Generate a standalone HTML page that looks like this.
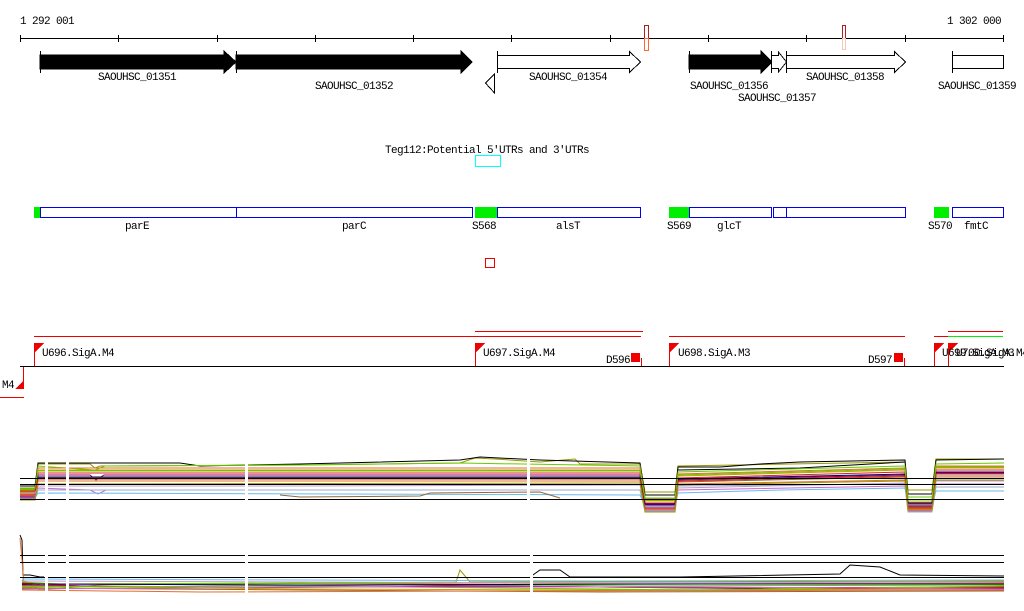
<!DOCTYPE html>
<html><head><meta charset="utf-8"><style>
html,body{margin:0;padding:0;background:#fff;width:1024px;height:611px;overflow:hidden}
text{font-family:"Liberation Mono",monospace;font-size:11px;letter-spacing:-0.6px;fill:#000}
</style></head><body>
<svg width="1024" height="611" viewBox="0 0 1024 611" xmlns="http://www.w3.org/2000/svg" shape-rendering="crispEdges">
<text x="20" y="24">1 292 001</text>
<text x="947" y="24">1 302 000</text>
<rect x="20" y="38" width="984" height="1" fill="#000"/>
<g stroke="#000">
<line x1="20.5" y1="35" x2="20.5" y2="42"/><line x1="118.5" y1="35" x2="118.5" y2="42"/><line x1="217.5" y1="35" x2="217.5" y2="42"/><line x1="315.5" y1="35" x2="315.5" y2="42"/><line x1="413.5" y1="35" x2="413.5" y2="42"/><line x1="511.5" y1="35" x2="511.5" y2="42"/><line x1="610.5" y1="35" x2="610.5" y2="42"/><line x1="708.5" y1="35" x2="708.5" y2="42"/><line x1="806.5" y1="35" x2="806.5" y2="42"/><line x1="905.5" y1="35" x2="905.5" y2="42"/><line x1="1003.5" y1="35" x2="1003.5" y2="42"/>
</g>
<rect x="644.5" y="25.5" width="4" height="13" fill="none" stroke="#aa2222"/>
<rect x="644.5" y="38.5" width="4" height="12" fill="none" stroke="#ff6633"/>
<rect x="842.5" y="25.5" width="3" height="13" fill="none" stroke="#aa2222"/>
<rect x="842.5" y="38.5" width="3" height="11" fill="none" stroke="#f5c8b8"/>
<g stroke="#000">
<line x1="40.5" y1="51" x2="40.5" y2="73"/>
<polygon points="40,55 224,55 224,51 236,62 224,73 224,69 40,69" fill="#000"/>
<line x1="236.5" y1="51" x2="236.5" y2="73"/>
<polygon points="236,55 461,55 461,51 472,62 461,73 461,69 236,69" fill="#000"/>
<polygon points="485.5,83 494.5,74 494.5,93" fill="#fff"/>
<line x1="497.5" y1="51" x2="497.5" y2="73"/>
<polygon points="497.5,55.5 629.5,55.5 629.5,51.5 640.5,62 629.5,72.5 629.5,68.5 497.5,68.5" fill="#fff"/>
<line x1="689.5" y1="51" x2="689.5" y2="73"/>
<polygon points="689,55 761,55 761,51 772,62 761,73 761,69 689,69" fill="#000"/>
<line x1="771.5" y1="51" x2="771.5" y2="73"/>
<polygon points="771.5,55.5 778.5,55.5 778.5,52 786.5,62 778.5,72 778.5,68.5 771.5,68.5" fill="#fff"/>
<line x1="786.5" y1="51" x2="786.5" y2="73"/>
<polygon points="786.5,55.5 894.5,55.5 894.5,51.5 905.5,62 894.5,72.5 894.5,68.5 786.5,68.5" fill="#fff"/>
<line x1="952.5" y1="51" x2="952.5" y2="73"/>
<rect x="952.5" y="55.5" width="51" height="13" fill="#fff"/>
</g>
<text x="98" y="80">SAOUHSC_01351</text>
<text x="315" y="89">SAOUHSC_01352</text>
<text x="529" y="80">SAOUHSC_01354</text>
<text x="690" y="89">SAOUHSC_01356</text>
<text x="738" y="101">SAOUHSC_01357</text>
<text x="806" y="80">SAOUHSC_01358</text>
<text x="938" y="89">SAOUHSC_01359</text>
<text x="385" y="153">Teg112:Potential 5′UTRs and 3′UTRs</text>
<rect x="475.5" y="155.5" width="25" height="11" fill="none" stroke="#00ffff"/>
<g fill="#00ee00"><rect x="34" y="207" width="6" height="11"/><rect x="475" y="207" width="22" height="11"/><rect x="669" y="207" width="20" height="11"/><rect x="934" y="207" width="15" height="11"/></g>
<g fill="none" stroke="#0000ee">
<rect x="40.5" y="207.5" width="196" height="10"/><rect x="236.5" y="207.5" width="236" height="10"/><rect x="497.5" y="207.5" width="143" height="10"/><rect x="689.5" y="207.5" width="82" height="10"/><rect x="773.5" y="207.5" width="13" height="10"/><rect x="786.5" y="207.5" width="119" height="10"/><rect x="952.5" y="207.5" width="51" height="10"/>
</g>
<text x="125" y="229">parE</text><text x="342" y="229">parC</text><text x="472" y="229">S568</text><text x="556" y="229">alsT</text>
<text x="667" y="229">S569</text><text x="717" y="229">glcT</text><text x="928" y="229">S570</text><text x="964" y="229">fmtC</text>
<rect x="485.5" y="258.5" width="9" height="9" fill="none" stroke="#ee0000"/>
<g fill="#ee0000">
<rect x="34" y="336" width="607" height="1"/><rect x="475" y="331" width="168" height="1"/>
<rect x="669" y="336" width="236" height="1"/><rect x="934" y="336" width="14" height="1"/><rect x="948" y="331" width="55" height="1"/>
<rect x="0" y="397" width="24" height="1"/>
</g>
<rect x="948" y="336" width="55" height="1" fill="#00ee00"/>
<rect x="20" y="366" width="984" height="1" fill="#000"/>
<g fill="#ee0000" stroke="#ee0000">
<line x1="34.5" y1="343" x2="34.5" y2="366"/><polygon points="35,343 44,343 35,352" stroke="none"/>
<line x1="475.5" y1="343" x2="475.5" y2="366"/><polygon points="476,343 485,343 476,352" stroke="none"/>
<line x1="669.5" y1="343" x2="669.5" y2="366"/><polygon points="670,343 679,343 670,352" stroke="none"/>
<line x1="934.5" y1="343" x2="934.5" y2="366"/><polygon points="935,343 944,343 935,352" stroke="none"/>
<line x1="948.5" y1="343" x2="948.5" y2="366"/><polygon points="949,343 958,343 949,352" stroke="none"/>
<rect x="631" y="353" width="9" height="9" stroke="none"/><line x1="641.5" y1="358" x2="641.5" y2="366"/>
<rect x="894" y="353" width="9" height="9" stroke="none"/><line x1="904.5" y1="358" x2="904.5" y2="366"/>
<line x1="23.5" y1="367" x2="23.5" y2="389"/><polygon points="24,380 24,389 15,389" stroke="none"/>
</g>
<text x="42" y="356">U696.SigA.M4</text>
<text x="483" y="356">U697.SigA.M4</text>
<text x="606" y="363">D596</text>
<text x="678" y="356">U698.SigA.M3</text>
<text x="868" y="363">D597</text>
<text x="942" y="356">U699.SigA.M3</text>
<text x="956" y="356">U700.SigA.M4</text>
<text x="-4" y="388">.M4</text>
<g fill="none" stroke-width="1" shape-rendering="auto">
<polyline stroke="#999900" points="20,488 35,488 38,464 90,464 95,468 100,466 300,465 460,463 475,458 495,459 540,462 575,459 580,464 640,464 645,492 675,492 678,466 905,462 908,490 932,490 936,459 1004,459"/>
<polyline stroke="#000" points="20,486 35,486 38,463 180,463 200,466 300,464 460,460 480,457 540,460 640,463 645,495 675,495 678,467 720,467 760,464 800,462 905,460 908,494 932,494 936,460 1004,459"/>
<polyline stroke="#000" points="678,470 800,468 905,462"/>
<polyline stroke="#66cc00" points="20,490 35,490 38,466 95,470 105,466 300,465 460,463 640,466 645,498 675,498 678,472 905,466 908,497 932,497 936,464 1004,463"/>
<polyline stroke="#e07030" points="20,492 35,492 38,468 640,468 645,499 675,499 678,474 905,468 908,500 932,500 936,466 1004,466"/>
<polyline stroke="#cc9900" points="20,494 35,494 38,470 640,470 645,501 675,501 678,476 905,470 908,502 932,502 936,468 1004,468"/>
<polyline stroke="#e02020" points="20,495 35,495 38,473 640,473 645,503 675,503 678,478 905,472 908,504 932,504 936,470 1004,470"/>
<polyline stroke="#990066" points="20,497 35,497 38,475 90,475 96,480 104,475 640,475 645,505 675,505 678,480 905,475 908,506 932,506 936,473 1004,473"/>
<polyline stroke="#996633" points="20,499 35,499 38,478 640,478 645,507 675,507 678,482 905,477 908,507 932,507 936,476 1004,476"/>
<polyline stroke="#e07030" points="20,500 35,500 38,481 640,481 645,509 675,509 678,484 905,480 908,509 932,509 936,478 1004,478"/>
<polyline stroke="#bb99cc" points="20,493 35,493 38,486 300,486 640,485 645,507 675,507 678,488 905,483 908,510 932,510 936,481 1004,481"/>
<polyline stroke="#cc66cc" points="20,496 35,496 38,488 90,490 98,494 106,490 640,490 645,510 675,510 678,490 905,486 908,511 932,511 936,484 1004,484"/>
<polyline stroke="#66bbee" points="20,498 35,498 38,493 640,495 645,506 675,506 678,493 780,490 905,488 908,505 932,505 936,491 1004,491"/>
<polyline stroke="#99aacc" points="20,498 35,498 38,490 640,490 645,511 675,511 678,486 905,484 908,512 932,512 936,487 1004,487"/>
<polyline stroke="#000066" points="20,491 35,491 38,477 640,477 645,504 675,504 678,479 905,474 908,503 932,503 936,472 1004,472"/>
<polyline stroke="#66cc00" points="20,489 35,489 38,471 640,471 645,500 675,500 678,475 905,469 908,500 932,500 936,467 1004,467"/>
<polyline stroke="#e02020" points="20,491 35,491 38,479 640,479 645,508 675,508 678,481 905,476 908,508 932,508 936,474 1004,474"/>
<polyline stroke="#999900" points="20,500 35,500 38,484 640,483 645,512 675,512 678,485 905,481 908,510 932,510 936,480 1004,480"/>
<polyline stroke="#996633" points="280,495 300,497 420,496 430,493 540,492 560,498"/>
</g>
<g stroke="#000">
<line x1="20" y1="478.5" x2="1004" y2="478.5"/><line x1="20" y1="484.5" x2="1004" y2="484.5"/><line x1="20" y1="499.5" x2="1004" y2="499.5"/>
</g>
<g fill="none" shape-rendering="auto">
<polyline stroke="#000" points="20,535 22,540 23,575 30,575 40,577 44,577"/>
<polyline stroke="#e07030" points="20,538 22,560 24,584 30,588 40,584 500,583 640,584 1004,583"/>
<polyline stroke="#999900" points="22,580 40,590 100,585 456,582 460,570 470,582 1004,581"/>
<polyline stroke="#66cc00" points="22,582 60,584 300,583 640,586 1004,585"/>
<polyline stroke="#e02020" points="22,583 100,587 400,585 700,588 1004,587"/>
<polyline stroke="#990066" points="22,585 200,588 500,586 800,589 1004,588"/>
<polyline stroke="#66bbee" points="22,579 300,580 600,581 1004,580"/>
<polyline stroke="#bb99cc" points="22,581 300,582 600,583 1004,582"/>
<polyline stroke="#cc9900" points="22,586 300,589 600,590 1004,589"/>
<polyline stroke="#996633" points="22,588 300,590 600,592 1004,591"/>
<polyline stroke="#e07030" points="22,590 200,592 500,591 1004,590"/>
<polyline stroke="#66cc00" points="22,587 300,586 700,590 1004,586"/>
<polyline stroke="#000066" points="22,584 300,585 700,584 1004,584"/>
<polyline stroke="#cc66cc" points="22,589 300,587 700,587 1004,589"/>
<polyline stroke="#000" points="530,577 540,570 560,570 570,577 680,577 840,574 850,565 880,567 900,575 1004,576"/>
</g>
<g stroke="#000">
<line x1="20" y1="555.5" x2="1004" y2="555.5"/><line x1="20" y1="562.5" x2="1004" y2="562.5"/><line x1="20" y1="577.5" x2="1004" y2="577.5"/>
</g>
<g fill="#fff">
<rect x="45" y="455" width="3" height="60"/><rect x="66" y="455" width="3" height="60"/><rect x="245" y="455" width="3" height="60"/><rect x="527" y="455" width="3" height="60"/>
<rect x="45" y="550" width="3" height="50"/><rect x="66" y="550" width="3" height="50"/><rect x="245" y="550" width="3" height="50"/><rect x="530" y="550" width="3" height="50"/>
</g>
</svg>
</body></html>
